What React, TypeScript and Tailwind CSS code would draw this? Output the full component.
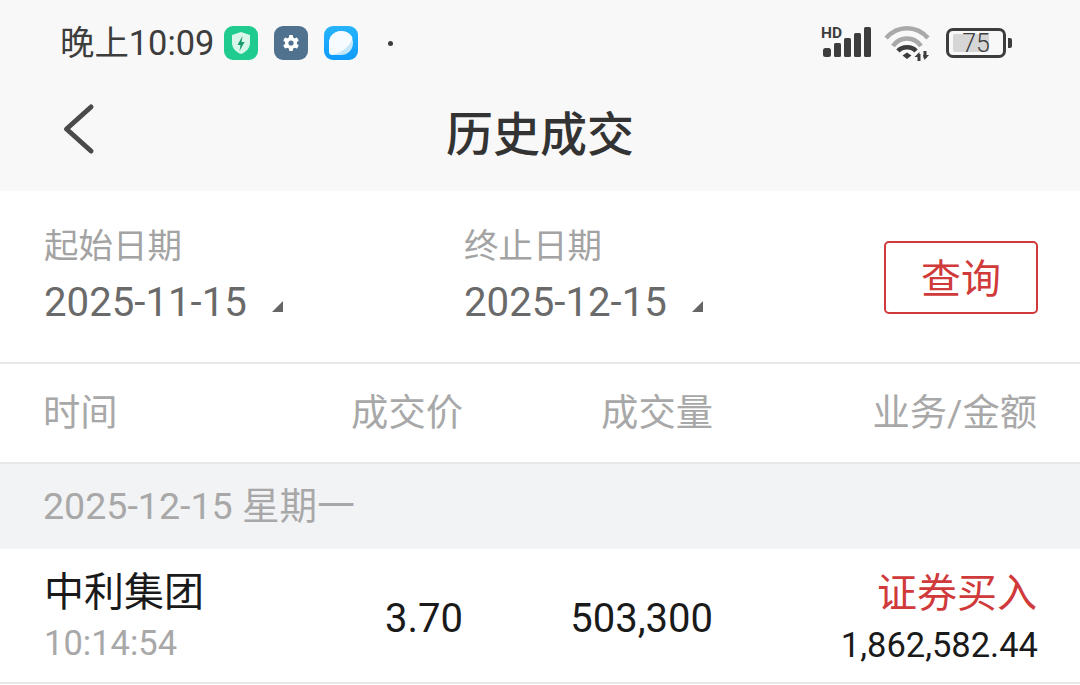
import React from 'react';

const font = { fontFamily: 'Roboto, "Noto Sans CJK SC", sans-serif' };

const ShieldIcon = () => (
  <svg width="34" height="34" viewBox="0 0 34 34">
    <rect width="34" height="34" rx="9" fill="#1fcb8e" />
    <path d="M17 6l9 3v8c0 5-4 9-9 11-5-2-9-6-9-11V9z" fill="#d8f7ea" />
    <path d="M18.5 10l-5 9h3l-1 6 5-9h-3z" fill="#149a6b" />
  </svg>
);

const GearIcon = () => (
  <svg width="34" height="34" viewBox="0 0 34 34">
    <rect width="34" height="34" rx="9" fill="#50728f" />
    <g fill="#fff">
      <circle cx="17" cy="17" r="6" />
      <rect x="15" y="9" width="4" height="16" rx="1" />
      <rect x="15" y="9" width="4" height="16" rx="1" transform="rotate(60 17 17)" />
      <rect x="15" y="9" width="4" height="16" rx="1" transform="rotate(120 17 17)" />
    </g>
    <circle cx="17" cy="17" r="2.6" fill="#50728f" />
  </svg>
);

const BubbleIcon = () => (
  <svg width="34" height="34" viewBox="0 0 34 34">
    <defs>
      <linearGradient id="bubble" x1="0" y1="0" x2="0" y2="1">
        <stop offset="0" stopColor="#27b4fb" />
        <stop offset="1" stopColor="#0f9bfb" />
      </linearGradient>
    </defs>
    <rect width="34" height="34" rx="9" fill="url(#bubble)" />
    <path d="M17 5a12 12 0 0 1 0 24H8a3 3 0 0 1-3-3V17A12 12 0 0 1 17 5z" fill="#c4e7fb" />
    <path d="M17 5c6 0 10 3 11.5 7-2 8-10 14-20 17-2-1-3.5-2-3.5-4V17A12 12 0 0 1 17 5z" fill="#f6fbff" />
  </svg>
);

const SignalIcon = () => (
  <svg width="52" height="40" viewBox="0 0 52 40" fill="#3d3d3d">
    <rect x="3" y="25" width="8" height="9" rx="2.5" />
    <rect x="14" y="20" width="7" height="14" rx="1.5" />
    <rect x="24" y="15" width="7" height="19" rx="1.5" />
    <rect x="34" y="10" width="7" height="24" rx="1.5" />
    <rect x="44" y="4" width="7" height="30" rx="1.5" />
    <text x="1" y="15" fontSize="15.5" fontWeight="700" fontFamily="Roboto, sans-serif">HD</text>
  </svg>
);

const WifiIcon = () => (
  <svg width="48" height="36" viewBox="0 0 48 36" fill="none">
    <path d="M2 13C14 0 32 0 44 13" stroke="#a9a9a9" strokeWidth="4.5" />
    <path d="M9 21C16 11 30 11 37 21" stroke="#a9a9a9" strokeWidth="4.5" />
    <path d="M14 26C18 21 28 21 32 26" stroke="#3d3d3d" strokeWidth="4.5" />
    <path d="M18.5 30.5l4.5-3 4.5 3-4.5 3.5z" fill="#3d3d3d" />
    <path d="M35 29v7" stroke="#3d3d3d" strokeWidth="3" />
    <path d="M30.5 32l5-5v5z" fill="#3d3d3d" />
    <path d="M41 26v7" stroke="#3d3d3d" strokeWidth="3" />
    <path d="M39 30h6l-4.5 5z" fill="#3d3d3d" />
  </svg>
);

const BatteryIcon = () => (
  <div className="flex items-center">
    <div className="relative flex h-[30px] w-[60px] items-center rounded-[7px] border-[3px] border-[#3d3d3d] py-[3px] pl-[4px] pr-[14px]">
      <div className="h-full w-full rounded-[2px] bg-[#d6d6d6]" />
      <span className="absolute inset-0 flex items-center justify-center text-[25px] font-light leading-none text-[#3d3d3d]">75</span>
    </div>
    <div className="ml-[2px] h-[10px] w-[4px] rounded-r-[2px] bg-[#3d3d3d]" />
  </div>
);

const BackIcon = () => (
  <svg className="absolute left-[60px] top-[16px]" width="36" height="54" viewBox="0 0 36 54" fill="none">
    <path d="M31 5L6.5 27L31 49" stroke="#4a4a4a" strokeWidth="5" strokeLinecap="round" strokeLinejoin="round" />
  </svg>
);

const Caret = () => (
  <span className="ml-[25px] mt-[8px] h-0 w-0 border-b-[11px] border-l-[11px] border-b-[#666] border-l-transparent" />
);

const DateField = ({ label, value, width }: { label: string; value: string; width: string }) => (
  <div className={width}>
    <div className="mt-[-2px] text-[34.5px] leading-[40px] text-[#a3a3a3]">{label}</div>
    <div className="mt-[14px] flex items-center text-[40.2px] leading-[46px] text-[#6a6a6a]">
      {value}
      <Caret />
    </div>
  </div>
);

const App: React.FC = () => {
  return (
    <div className="h-[685px] w-[1080px] overflow-hidden bg-white" style={font}>
      <div className="h-[191px] bg-[#f8f8f8]">
        <div className="flex h-[86px] items-center pl-[60px] pr-[68px]">
          <span className="text-[34.4px] leading-none text-[#3d3d3d]">晚上10:09</span>
          <div className="ml-[10px] flex items-center gap-[16px]">
            <ShieldIcon />
            <GearIcon />
            <BubbleIcon />
          </div>
          <span className="ml-[30px] h-[5px] w-[5px] rounded-full bg-[#3d3d3d]" />
          <div className="ml-auto flex items-center">
            <SignalIcon />
            <div className="ml-[12px]">
              <WifiIcon />
            </div>
            <div className="ml-[14px]">
              <BatteryIcon />
            </div>
          </div>
        </div>
        <div className="relative flex h-[92px] items-center justify-center">
          <BackIcon />
          <span className="pt-[4px] text-[47px] font-medium leading-none text-[#333]">历史成交</span>
        </div>
      </div>

      <div className="flex h-[173px] items-center border-b-[2px] border-[#e8e8e8] pl-[44px] pr-[42px]">
        <DateField label="起始日期" value="2025-11-15" width="w-[420px]" />
        <DateField label="终止日期" value="2025-12-15" width="w-[420px]" />
        <button className="ml-auto mt-[2px] flex h-[73px] w-[154px] items-center justify-center rounded-[5px] border-[2px] border-[#d03a3a] pt-[4px] text-[40px] leading-none text-[#d03a3a]">
          查询
        </button>
      </div>

      <div className="flex h-[98px] items-center pl-[43px] pr-[43px] pt-[1px] text-[37.3px] text-[#a8a8a8]">
        <span className="flex-1">时间</span>
        <span className="w-[200px] text-right">成交价</span>
        <span className="w-[250px] text-right">成交量</span>
        <span className="w-[324px] text-right">业务/金额</span>
      </div>

      <div className="flex h-[87px] items-center border-t-[2px] border-[#e8e8e8] bg-[#f2f3f5] pl-[43px] text-[37.6px] text-[#a8a8a8]">
        2025-12-15 星期一
      </div>

      <div className="flex h-[135px] items-center border-b-[2px] border-[#e8e8e8] pl-[44px] pr-[43px]">
        <div className="flex-1">
          <div className="pt-[1px] text-[40px] leading-[48px] text-[#1a1a1a]">中利集团</div>
          <div className="mt-[6px] text-[34.5px] leading-[40px] text-[#a8a8a8]">10:14:54</div>
        </div>
        <span className="w-[200px] pt-[7px] text-right text-[40px] text-[#1a1a1a]">3.70</span>
        <span className="w-[250px] pt-[7px] text-right text-[40px] text-[#1a1a1a]">503,300</span>
        <div className="w-[324px] pt-[6px] text-right">
          <div className="text-[40px] leading-[46px] text-[#d03a3a]">证券买入</div>
          <div className="mr-[-1px] mt-[7px] text-[34.5px] leading-[42px] text-[#1a1a1a]">1,862,582.44</div>
        </div>
      </div>
    </div>
  );
};

export default App;
